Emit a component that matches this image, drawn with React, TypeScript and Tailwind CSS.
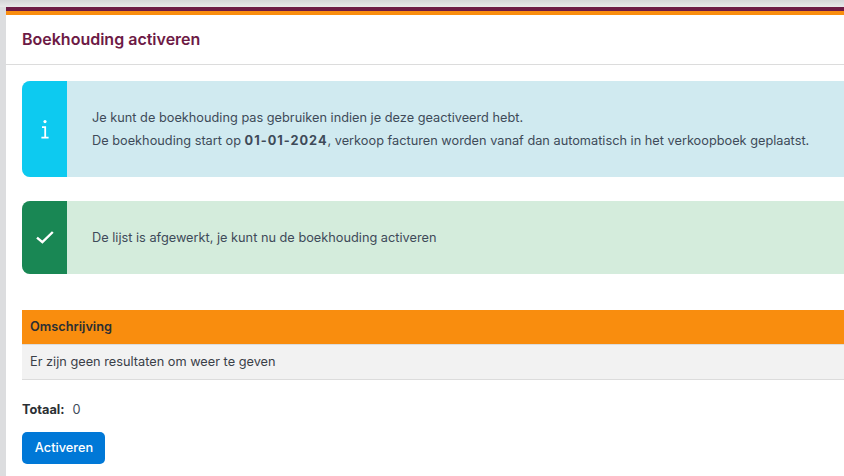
export default function App() {
  return (
    <div className="h-[476px] w-[844px] overflow-hidden bg-[#dcdddf] pl-[6px] font-['Inter',sans-serif] text-[12.75px] text-[#3e4a59]">
      <div className="-ml-[6px] h-[7px] bg-gradient-to-b from-[#d4d5d7] to-[#e8e8e9]" />
      <div className="h-[469px] bg-white">
        <div className="h-1 bg-[#6d1a45]" />
        <div className="h-1 bg-[#f98d0e]" />
        <div className="flex h-[50px] items-center border-b border-[#dcdcdc] pb-[2px] pl-4">
          <h1 className="text-[16px] font-semibold leading-none text-[#6d1a45]">Boekhouding activeren</h1>
        </div>
        <div className="pl-4 pt-4">
          <div className="flex h-24 overflow-hidden rounded-l-lg bg-[#d0eaf0]">
            <div className="flex w-[45px] shrink-0 items-center justify-center bg-[#0dcaf0] text-white">
              <svg width="8" height="19" viewBox="0 0 8 19" fill="none" stroke="currentColor" strokeWidth="1.8">
                <circle cx="4" cy="1.6" r="1.6" fill="currentColor" stroke="none" />
                <path d="M1 7.2H4.2V17.4M0.4 17.6H7.6" />
              </svg>
            </div>
            <div className="flex flex-col justify-center gap-[3px] whitespace-nowrap pl-[25px] leading-[20px]">
              <p>Je kunt de boekhouding pas gebruiken indien je deze geactiveerd hebt.</p>
              <p>
                De boekhouding start op <strong className="font-bold tracking-[1px]">01-01-2024</strong>, verkoop facturen worden vanaf dan automatisch in het verkoopboek geplaatst.
              </p>
            </div>
          </div>
          <div className="mt-6 flex h-[73px] overflow-hidden rounded-l-lg bg-[#d4ecdc]">
            <div className="flex w-[45px] shrink-0 items-center justify-center bg-[#198754] text-white">
              <svg width="18" height="13" viewBox="0 0 18 13" fill="none" stroke="currentColor" strokeWidth="2.4">
                <path d="M1 6.6L6.4 11.2L16.8 1" />
              </svg>
            </div>
            <div className="flex items-center pl-[25px]">De lijst is afgewerkt, je kunt nu de boekhouding activeren</div>
          </div>
          <div className="mt-9">
            <div className="flex h-[34px] items-center bg-[#f98d0e] pl-2 font-semibold text-[#2b2f33]">Omschrijving</div>
            <div className="flex h-[36px] items-center border-y border-[#dcdcdc] bg-[#f2f2f2] pl-2 text-[#3a4048]">Er zijn geen resultaten om weer te geven</div>
          </div>
          <div className="mt-[21px] flex h-[18px] items-center">
            <strong className="font-bold text-[#2b2f33]">Totaal:</strong>
            <span className="ml-2">0</span>
          </div>
          <button className="mt-[13px] flex h-8 w-[83px] items-center justify-center rounded-[5px] bg-[#0078d7] pl-[1px] font-medium text-white">Activeren</button>
        </div>
      </div>
    </div>
  );
}
